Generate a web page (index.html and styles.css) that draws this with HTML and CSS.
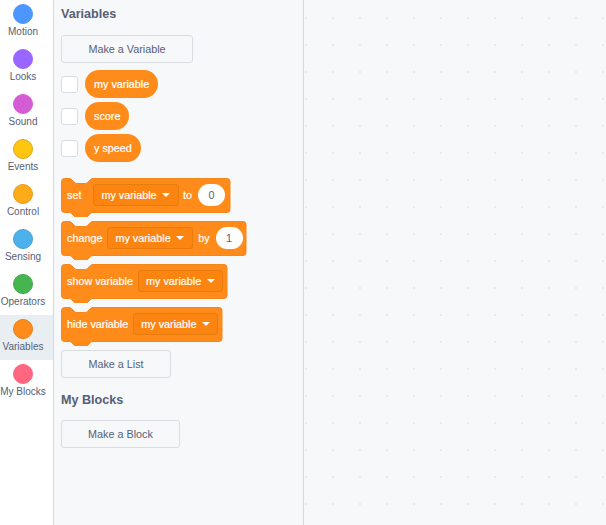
FILE: index.html
```html
<!DOCTYPE html>
<html lang="en">
<head>
<meta charset="utf-8">
<title>Variables</title>
<link rel="stylesheet" href="styles.css">
</head>
<body>
<div class="editor">
  <nav class="categories">
    <div class="cat"><span class="dot motion"></span><span class="cat-label">Motion</span></div>
    <div class="cat"><span class="dot looks"></span><span class="cat-label">Looks</span></div>
    <div class="cat"><span class="dot sound"></span><span class="cat-label">Sound</span></div>
    <div class="cat"><span class="dot events"></span><span class="cat-label">Events</span></div>
    <div class="cat"><span class="dot control"></span><span class="cat-label">Control</span></div>
    <div class="cat"><span class="dot sensing"></span><span class="cat-label">Sensing</span></div>
    <div class="cat"><span class="dot operators"></span><span class="cat-label">Operators</span></div>
    <div class="cat selected"><span class="dot variables"></span><span class="cat-label">Variables</span></div>
    <div class="cat"><span class="dot myblocks"></span><span class="cat-label">My Blocks</span></div>
  </nav>
  <section class="palette">
    <h2 class="heading">Variables</h2>
    <button class="make make-var">Make a Variable</button>
    <div class="reporters">
      <div class="rep-row"><span class="check"></span><span class="reporter">my variable</span></div>
      <div class="rep-row"><span class="check"></span><span class="reporter">score</span></div>
      <div class="rep-row"><span class="check"></span><span class="reporter">y speed</span></div>
    </div>
    <div class="stack">
      <div class="block b-set">
        <svg class="shape" width="170" height="39" viewBox="0 0 170 39"><path d="M.5 3.5a3 3 0 0 1 3-3H8c1.4 0 2.1.6 2.8 1.3l2.4 2.4c.7.7 1.4 1.3 2.8 1.3h8c1.4 0 2.1-.6 2.8-1.3l2.4-2.4c.7-.7 1.4-1.3 2.8-1.3H166a3 3 0 0 1 3 3v28a3 3 0 0 1-3 3H32c-1.4 0-2.1.6-2.8 1.3l-2.4 2.4c-.7.7-1.4 1.3-2.8 1.3h-8c-1.4 0-2.1-.6-2.8-1.3l-2.4-2.4c-.7-.7-1.4-1.3-2.8-1.3H3.5a3 3 0 0 1-3-3z"/></svg>
        <span class="word">set</span>
        <span class="drop">my variable<i class="caret"></i></span>
        <span class="word">to</span>
        <span class="pill">0</span>
      </div>
      <div class="block b-change">
        <svg class="shape" width="186" height="39" viewBox="0 0 186 39"><path d="M.5 3.5a3 3 0 0 1 3-3H8c1.4 0 2.1.6 2.8 1.3l2.4 2.4c.7.7 1.4 1.3 2.8 1.3h8c1.4 0 2.1-.6 2.8-1.3l2.4-2.4c.7-.7 1.4-1.3 2.8-1.3H182a3 3 0 0 1 3 3v28a3 3 0 0 1-3 3H32c-1.4 0-2.1.6-2.8 1.3l-2.4 2.4c-.7.7-1.4 1.3-2.8 1.3h-8c-1.4 0-2.1-.6-2.8-1.3l-2.4-2.4c-.7-.7-1.4-1.3-2.8-1.3H3.5a3 3 0 0 1-3-3z"/></svg>
        <span class="word">change</span>
        <span class="drop">my variable<i class="caret"></i></span>
        <span class="word">by</span>
        <span class="pill">1</span>
      </div>
      <div class="block b-show">
        <svg class="shape" width="167" height="39" viewBox="0 0 167 39"><path d="M.5 3.5a3 3 0 0 1 3-3H8c1.4 0 2.1.6 2.8 1.3l2.4 2.4c.7.7 1.4 1.3 2.8 1.3h8c1.4 0 2.1-.6 2.8-1.3l2.4-2.4c.7-.7 1.4-1.3 2.8-1.3H163a3 3 0 0 1 3 3v28a3 3 0 0 1-3 3H32c-1.4 0-2.1.6-2.8 1.3l-2.4 2.4c-.7.7-1.4 1.3-2.8 1.3h-8c-1.4 0-2.1-.6-2.8-1.3l-2.4-2.4c-.7-.7-1.4-1.3-2.8-1.3H3.5a3 3 0 0 1-3-3z"/></svg>
        <span class="word">show variable</span>
        <span class="drop">my variable<i class="caret"></i></span>
      </div>
      <div class="block b-hide">
        <svg class="shape" width="162" height="39" viewBox="0 0 162 39"><path d="M.5 3.5a3 3 0 0 1 3-3H8c1.4 0 2.1.6 2.8 1.3l2.4 2.4c.7.7 1.4 1.3 2.8 1.3h8c1.4 0 2.1-.6 2.8-1.3l2.4-2.4c.7-.7 1.4-1.3 2.8-1.3H158a3 3 0 0 1 3 3v28a3 3 0 0 1-3 3H32c-1.4 0-2.1.6-2.8 1.3l-2.4 2.4c-.7.7-1.4 1.3-2.8 1.3h-8c-1.4 0-2.1-.6-2.8-1.3l-2.4-2.4c-.7-.7-1.4-1.3-2.8-1.3H3.5a3 3 0 0 1-3-3z"/></svg>
        <span class="word">hide variable</span>
        <span class="drop">my variable<i class="caret"></i></span>
      </div>
    </div>
    <button class="make make-list">Make a List</button>
    <h2 class="heading heading-blocks">My Blocks</h2>
    <button class="make make-block">Make a Block</button>
  </section>
  <main class="workspace"></main>
</div>
</body>
</html>
```
FILE: styles.css
```css
html, body {
  margin: 0;
  padding: 0;
  height: 100%;
  overflow: hidden;
}
body {
  font-family: "Liberation Sans", Arial, sans-serif;
  color: #575e75;
  background: #fff;
}
.editor {
  display: flex;
  height: 525px;
}
.categories {
  width: 53px;
  flex: none;
  background: #fff;
  border-right: 1px solid #d9d9d9;
  overflow: hidden;
}
.cat {
  height: 45px;
  padding: 3.5px 7px 0 0;
  box-sizing: border-box;
  display: flex;
  flex-direction: column;
  align-items: center;
}
.cat.selected {
  background: #e9eef2;
}
.dot {
  width: 20px;
  height: 20px;
  border-radius: 50%;
  border: 1px solid transparent;
  box-sizing: border-box;
  flex: none;
}
.motion { background: #4c97ff; border-color: #4c97ff; }
.looks { background: #9966ff; border-color: #9966ff; }
.sound { background: #d65cd6; border-color: #d65cd6; }
.events { background: #ffc60f; border-color: #e5a31f; }
.control { background: #ffab19; border-color: #e8991a; }
.sensing { background: #4db1eb; border-color: #4c9ed8; }
.operators { background: #44b54f; border-color: #44a64c; }
.variables { background: #ff8c1a; border-color: #e67e14; }
.myblocks { background: #ff6680; border-color: #ff6680; }
.cat-label {
  font-size: 10px;
  line-height: 12px;
  margin-top: 2px;
  white-space: nowrap;
}
.palette {
  flex: none;
  background: #f6f8fa;
  border-right: 1px solid #d9d9d9;
  padding: 0 0 0 7px;
  width: 242px;
}
.heading {
  margin: 0;
  font-size: 12.6px;
  line-height: 14px;
  font-weight: bold;
  padding-top: 7px;
}
.heading-blocks {
  padding-top: 15px;
}
.make {
  display: block;
  height: 28px;
  padding: 0;
  background: #f6f8fa;
  border: 1px solid #d9dce0;
  border-radius: 3px;
  color: #575e75;
  font: 10.8px "Liberation Sans", Arial, sans-serif;
  text-align: center;
}
.make-var { width: 132px; margin-top: 14px; }
.make-list { width: 110px; }
.make-block { width: 119px; margin-top: 13px; }
.reporters {
  margin-top: 7px;
  display: flex;
  flex-direction: column;
  gap: 4px;
}
.rep-row {
  display: flex;
  align-items: center;
  gap: 7px;
}
.check {
  width: 17px;
  height: 17px;
  box-sizing: border-box;
  background: #fff;
  border: 1px solid #d9dce0;
  border-radius: 3px;
  flex: none;
}
.reporter {
  height: 28px;
  box-sizing: border-box;
  padding: 0 9px;
  border-radius: 14px;
  background: #ff8c1a;
  color: #fff;
  font-size: 10.8px;
  line-height: 28px;
  -webkit-text-stroke: 0.2px #fff;
}
.stack {
  margin-top: 16px;
}
.block {
  position: relative;
  height: 39px;
  display: flex;
  align-items: flex-start;
  color: #fff;
  font-size: 10.8px;
  margin-bottom: 4px;
  padding-left: 6px;
  -webkit-text-stroke: 0.2px #fff;
}
.shape {
  position: absolute;
  left: 0;
  top: 0;
}
.shape path {
  fill: #ff8c1a;
  stroke: #f5861a;
  stroke-width: 1;
}
.word {
  position: relative;
  line-height: 34px;
  white-space: nowrap;
}
.drop {
  position: relative;
  margin-top: 6px;
  margin-left: 5px;
  height: 22px;
  box-sizing: border-box;
  display: flex;
  align-items: center;
  padding: 0 7.5px 0 7px;
  background: #fb8510;
  border: 1px solid #e87b0c;
  border-radius: 3px;
  white-space: nowrap;
}
.caret {
  width: 0;
  height: 0;
  margin-left: 5.5px;
  border-left: 4px solid transparent;
  border-right: 4px solid transparent;
  border-top: 4.5px solid #fff;
}
.b-set .drop { margin-left: 12px; margin-right: 4.5px; }
.b-change .drop { margin-right: 5.5px; }
.pill {
  position: relative;
  margin-top: 6px;
  margin-left: 6px;
  width: 27px;
  height: 22px;
  border-radius: 11px;
  background: #fff;
  color: #575e75;
  text-align: center;
  line-height: 22px;
  -webkit-text-stroke: 0;
}
.workspace {
  flex: 1;
  background-color: #f6f8fa;
  background-image: radial-gradient(circle at 2px 18px, #e8eaed 1.1px, transparent 1.4px);
  background-size: 27px 27px;
}
```
